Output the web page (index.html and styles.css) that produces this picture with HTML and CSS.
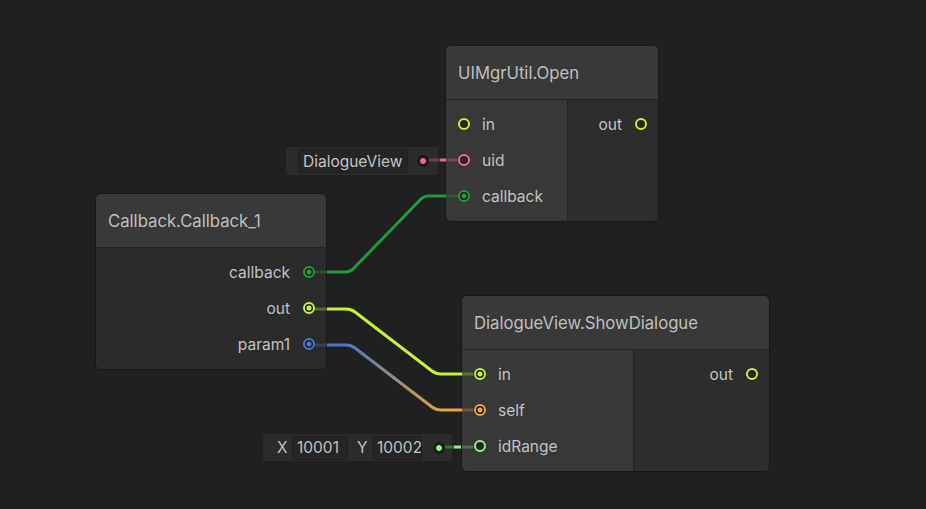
FILE: index.html
```html
<!DOCTYPE html>
<html>
<head>
<meta charset="utf-8">
<link rel="stylesheet" href="styles.css">
</head>
<body>
<div class="canvas">
  <div class="node n-open">
    <div class="node-title">UIMgrUtil.Open</div>
    <div class="node-body">
      <div class="inputs w-open">
        <div class="row"><span class="port lime"></span><span class="label">in</span></div>
        <div class="row"><span class="port pink"></span><span class="label">uid</span></div>
        <div class="row"><span class="port green on"></span><span class="label">callback</span></div>
      </div>
      <div class="outputs">
        <div class="row"><span class="label">out</span><span class="port lime"></span></div>
      </div>
    </div>
  </div>

  <div class="node n-callback">
    <div class="node-title">Callback.Callback_1</div>
    <div class="node-body">
      <div class="outputs dark">
        <div class="row"><span class="label">callback</span><span class="port green on"></span></div>
        <div class="row"><span class="label">out</span><span class="port lime on"></span></div>
        <div class="row"><span class="label">param1</span><span class="port blue on"></span></div>
      </div>
    </div>
  </div>

  <div class="node n-show">
    <div class="node-title">DialogueView.ShowDialogue</div>
    <div class="node-body">
      <div class="inputs w-show">
        <div class="row"><span class="port lime on"></span><span class="label">in</span></div>
        <div class="row"><span class="port orange on"></span><span class="label">self</span></div>
        <div class="row"><span class="port pale"></span><span class="label">idRange</span></div>
      </div>
      <div class="outputs">
        <div class="row"><span class="label">out</span><span class="port lime"></span></div>
      </div>
    </div>
  </div>

  <div class="const c-uid">
    <div class="field f-view">DialogueView</div>
    <span class="cdot pink-dot"></span>
  </div>

  <div class="const c-range">
    <span class="axis">X</span>
    <div class="field f-x">10001</div>
    <span class="axis ax-y">Y</span>
    <div class="field f-y">10002</div>
    <span class="cdot pale-dot"></span>
  </div>

  <svg class="edges" width="926" height="509" viewBox="0 0 926 509">
    <defs>
      <linearGradient id="bo" gradientUnits="userSpaceOnUse" x1="345" y1="0" x2="445" y2="0">
        <stop offset="0" stop-color="#4a74c8"/>
        <stop offset="1" stop-color="#e8a43a"/>
      </linearGradient>
    </defs>
    <g fill="none" stroke-width="3" stroke-linecap="butt" stroke-linejoin="round">
      <path d="M315 272 H327" stroke="#1f9a3c" stroke-opacity="0.3"/>
      <path d="M327 272 H345 Q351 272 355 267 L419 201 Q423 196 429 196 H446" stroke="#1f9a3c"/>
      <path d="M446 196 H458" stroke="#1f9a3c" stroke-opacity="0.3"/>
      <path d="M315 309 H327" stroke="#c5f23a" stroke-opacity="0.3"/>
      <path d="M327 309 H346 Q351 309 355 312 L432 371 Q436 374 441 374 H462" stroke="#c5f23a"/>
      <path d="M462 374 H473" stroke="#c5f23a" stroke-opacity="0.3"/>
      <path d="M315 345 H327" stroke="#4a74c8" stroke-opacity="0.3"/>
      <path d="M327 345 H346 Q351 345 355 348 L432 407 Q436 410 441 410 H462" stroke="url(#bo)"/>
      <path d="M462 410 H473" stroke="#e8a43a" stroke-opacity="0.3"/>
      <path d="M429 160 H440" stroke="#ee62a2" stroke-opacity="0.3"/>
      <path d="M440 160 H446" stroke="#ee62a2"/>
      <path d="M446 160 H458" stroke="#ee62a2" stroke-opacity="0.3"/>
      <path d="M445 447 H454" stroke="#8fef8f" stroke-opacity="0.3"/>
      <path d="M454 447 H461" stroke="#8fef8f"/>
      <path d="M462 447 H473" stroke="#8fef8f" stroke-opacity="0.3"/>
    </g>
  </svg>
</div>
</body>
</html>
```

FILE: styles.css
```css
* { box-sizing: border-box; }
html, body { margin: 0; padding: 0; background: #202020; }
.canvas {
  position: relative;
  width: 926px;
  height: 509px;
  overflow: hidden;
  background: #202020;
  font-family: Inter, "Noto Sans", sans-serif;
  color: #c2c2c2;
}
.node {
  position: absolute;
  height: 177px;
  border: 1px solid #181818;
  border-radius: 6px;
  overflow: hidden;
  display: flex;
  flex-direction: column;
  background: #2d2d2d;
}
.n-open { left: 445px; top: 45px; width: 214px; }
.n-callback { left: 95px; top: 193px; width: 232px; }
.n-show { left: 461px; top: 295px; width: 309px; }

.node-title {
  height: 54px;
  flex: none;
  border-bottom: 1px solid #242424;
  background: #393939;
  display: flex;
  align-items: center;
  padding-left: 12px;
  font-size: 16.7px;
  color: #bfbfbf;
}
.node-body { display: flex; flex: 1; }
.inputs {
  background: #383838;
  border-right: 1px solid #232323;
  padding: 6px 0;
}
.w-open { width: 122px; }
.w-show { width: 172px; }
.outputs { flex: 1; background: #2d2d2d; padding: 6px 0; }
.outputs.dark { background: #2b2b2b; }

.row {
  height: 36px;
  display: flex;
  align-items: center;
  font-size: 15.5px;
}
.inputs .row { padding-left: 12px; gap: 12px; }
.outputs .row { justify-content: flex-end; padding-right: 11px; gap: 13px; }

.port {
  --c: #c5f23a;
  width: 12px;
  height: 12px;
  flex: none;
  border-radius: 50%;
  border: 2px solid var(--c);
  background: #262626;
}
.port.on { background: radial-gradient(circle, var(--c) 0 2.3px, #1c1c1c 2.8px); }
.lime { --c: #c5f23a; }
.pink { --c: #ee62a2; }
.green { --c: #1f9a3c; }
.blue { --c: #4a74c8; }
.orange { --c: #e8a43a; }
.pale { --c: #8fef8f; }

.const {
  position: absolute;
  display: flex;
  align-items: center;
  background: #2b2b2b;
  border-radius: 2px;
  font-size: 15.5px;
}
.c-uid { left: 286px; top: 147px; width: 152px; height: 28px; padding-left: 12px; }
.c-range { left: 263px; top: 434px; width: 189px; height: 27px; padding-left: 14px; }
.field {
  height: 24px;
  background: #252525;
  border: 1px solid #1f1f1f;
  border-radius: 2px;
  padding: 0 4px;
  display: flex;
  align-items: center;
  color: #c2c2c2;
  overflow: hidden;
  white-space: nowrap;
}
.f-view { width: 110px; margin-right: 9px; }
.f-x { width: 56px; margin-left: 6px; }
.f-y { width: 49px; margin-left: 7px; margin-right: 11px; padding: 0 3px; }
.axis { width: 9px; color: #c2c2c2; }
.ax-y { margin-left: 9px; }
.cdot {
  width: 12px;
  height: 12px;
  flex: none;
  border-radius: 50%;
}
.pink-dot { background: radial-gradient(circle, #ee62a2 0 2.6px, #1a1a1a 3.2px); }
.pale-dot { background: radial-gradient(circle, #8fef8f 0 2.6px, #1a1a1a 3.2px); }

.edges {
  position: absolute;
  left: 0;
  top: 0;
  pointer-events: none;
}
```
